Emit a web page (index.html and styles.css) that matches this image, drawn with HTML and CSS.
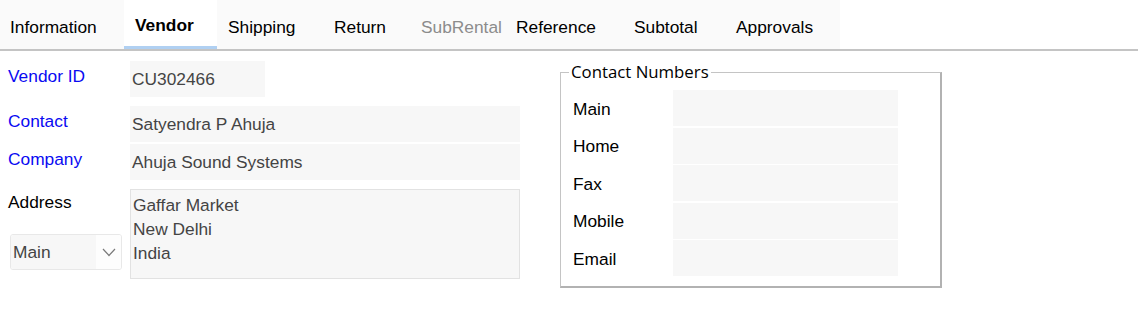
FILE: index.html
```html
<!DOCTYPE html>
<html>
<head>
<meta charset="utf-8">
<link rel="stylesheet" href="styles.css">
</head>
<body>
<div class="tabbar">
  <div class="tabs">
    <div class="tab t-info">Information</div>
    <div class="tab t-vendor active">Vendor</div>
    <div class="tab t-ship">Shipping</div>
    <div class="tab t-return">Return</div>
    <div class="tab t-sub disabled">SubRental</div>
    <div class="tab t-ref">Reference</div>
    <div class="tab t-subtotal">Subtotal</div>
    <div class="tab t-appr">Approvals</div>
  </div>
</div>
<div class="content">
  <div class="left">
    <div class="row r1">
      <div class="label link">Vendor ID</div>
      <div class="field f-id">CU302466</div>
    </div>
    <div class="row r2">
      <div class="label link">Contact</div>
      <div class="field f-wide">Satyendra P Ahuja</div>
    </div>
    <div class="row r3">
      <div class="label link">Company</div>
      <div class="field f-wide">Ahuja Sound Systems</div>
    </div>
    <div class="row r4">
      <div class="addr-side">
        <div class="label plain">Address</div>
        <div class="select">
          <span class="sel-text">Main</span>
          <span class="sel-arrow">
            <svg width="14" height="9" viewBox="0 0 14 9"><polyline points="1,1 7,7.5 13,1" fill="none" stroke="#7a7a7a" stroke-width="1.2"/></svg>
          </span>
        </div>
      </div>
      <div class="address">
        <div>Gaffar Market</div>
        <div>New Delhi</div>
        <div>India</div>
      </div>
    </div>
  </div>
  <fieldset class="numbers">
    <legend>Contact Numbers</legend>
    <div class="nrows">
      <div class="nrow"><span class="nlabel">Main</span><span class="nfield"></span></div>
      <div class="nrow"><span class="nlabel">Home</span><span class="nfield"></span></div>
      <div class="nrow"><span class="nlabel">Fax</span><span class="nfield"></span></div>
      <div class="nrow"><span class="nlabel">Mobile</span><span class="nfield"></span></div>
      <div class="nrow"><span class="nlabel">Email</span><span class="nfield"></span></div>
    </div>
  </fieldset>
</div>
</body>
</html>
```

FILE: styles.css
```css
html, body {
  margin: 0;
  padding: 0;
  background: #ffffff;
}
body {
  font-family: "Liberation Sans", Arial, sans-serif;
  font-size: 13pt;
  color: #000;
}
.tabbar {
  border-bottom: 2px solid #c4c4c4;
  height: 49px;
}
.tabs {
  display: flex;
  width: 840px;
  height: 49px;
  background: #fafafa;
}
.tab {
  box-sizing: border-box;
  height: 49px;
  padding-top: 4px;
  display: flex;
  align-items: center;
  color: #000;
  white-space: nowrap;
  line-height: 20px;
}
.t-info { width: 124px; padding-left: 10px; }
.t-vendor { width: 93px; padding-left: 11px; }
.t-ship { width: 106px; padding-left: 11px; }
.t-return { width: 90px; padding-left: 11px; }
.t-sub { width: 92px; padding-left: 8px; }
.t-ref { width: 118px; padding-left: 11px; }
.t-subtotal { width: 102px; padding-left: 11px; }
.t-appr { width: 115px; padding-left: 11px; }
.tab.active {
  background: #ffffff;
  font-weight: bold;
  border-bottom: 3px solid #b0d0f2;
}
.tab.disabled { color: #8c8c8c; }

.content {
  display: flex;
  align-items: flex-start;
}
.left {
  width: 560px;
  padding-top: 10px;
}
.row {
  display: flex;
  align-items: flex-start;
}
.r2 { margin-top: 9px; }
.r3 { margin-top: 2px; }
.r4 { margin-top: 9px; }
.label {
  box-sizing: border-box;
  width: 130px;
  padding-left: 8px;
  line-height: 20px;
  padding-top: 5px;
}
.link { color: #0a0af2; }
.plain { color: #000; }
.field {
  box-sizing: border-box;
  height: 36px;
  background: #f7f7f7;
  color: #444;
  padding-left: 2px;
  line-height: 36px;
}
.f-id { width: 135px; }
.f-wide { width: 390px; }
.addr-side {
  width: 130px;
}
.addr-side .label { padding-top: 3px; }
.select {
  box-sizing: border-box;
  margin: 22px 0 0 10px;
  width: 112px;
  height: 36px;
  border: 1px solid #e8e8e8;
  border-radius: 3px;
  display: flex;
  overflow: hidden;
}
.sel-text {
  flex: 1;
  background: #f7f7f7;
  color: #444;
  line-height: 34px;
  padding-left: 2px;
}
.sel-arrow {
  width: 25px;
  background: #fdfdfd;
  display: flex;
  align-items: center;
  justify-content: center;
}
.address {
  box-sizing: border-box;
  width: 390px;
  height: 90px;
  background: #f7f7f7;
  border: 1px solid #e2e2e2;
  color: #444;
  padding: 3px 0 0 2px;
  line-height: 24px;
}

.numbers {
  box-sizing: border-box;
  margin: 11px 0 0 0;
  padding: 0 0 10px 0;
  width: 382px;
  border: 1px solid #c4c4c4;
  border-right: 2px solid #b2b2b2;
  border-bottom: 2px solid #b2b2b2;
  min-width: 0;
}
.numbers legend {
  font-family: "Open Sans", "Noto Sans", sans-serif;
  font-size: 16.8px;
  line-height: 20px;
  margin-left: 8px;
  padding: 0 2px;
  color: #000;
}
.nrows {
  display: flex;
  flex-direction: column;
  gap: 1.5px;
  padding-left: 12px;
  margin-top: 8px;
}
.nrow {
  display: flex;
  align-items: center;
  height: 36px;
}
.nlabel {
  width: 100px;
  line-height: 20px;
  margin-top: 1px;
}
.nfield {
  width: 225px;
  height: 36px;
  background: #f7f7f7;
}
```
